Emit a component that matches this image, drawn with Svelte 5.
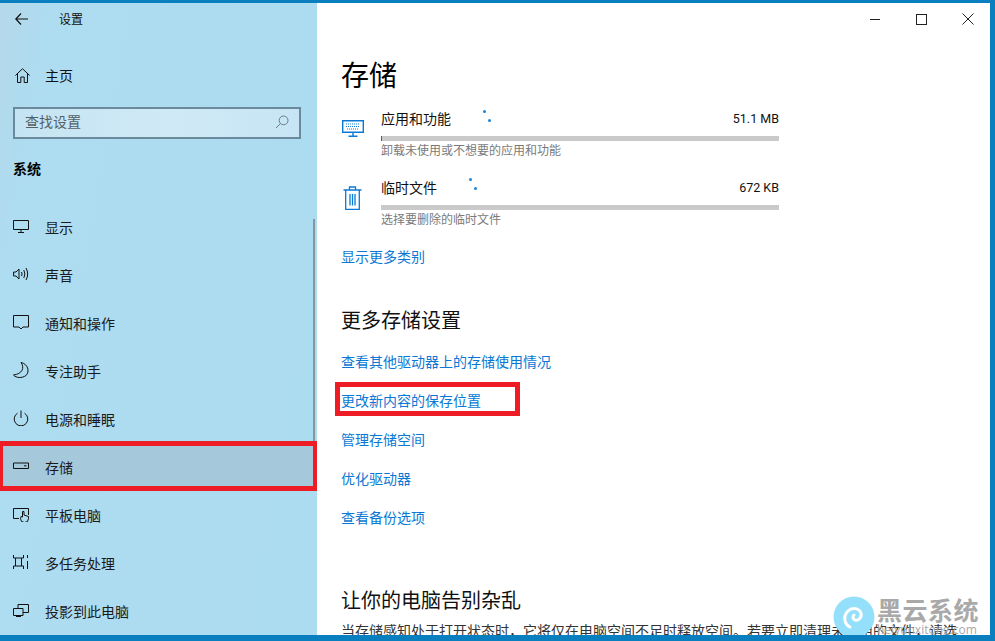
<script lang="ts">
  const navItems = [
    { id: "display", label: "显示" },
    { id: "sound", label: "声音" },
    { id: "notify", label: "通知和操作" },
    { id: "focus", label: "专注助手" },
    { id: "power", label: "电源和睡眠" },
    { id: "storage", label: "存储", active: true },
    { id: "tablet", label: "平板电脑" },
    { id: "multi", label: "多任务处理" },
    { id: "project", label: "投影到此电脑" }
  ];

  const links = [
    { label: "查看其他驱动器上的存储使用情况" },
    { label: "更改新内容的保存位置", marked: true },
    { label: "管理存储空间" },
    { label: "优化驱动器" },
    { label: "查看备份选项" }
  ];
</script>

<div class="desktop">
  <div class="window">
    <aside class="sidebar">
      <div class="head">
        <svg class="back" width="13" height="12" viewBox="0 0 13 12"><path d="M6 .5.8 6 6 11.500M.8 6H13" /></svg>
        <span>设置</span>
      </div>

      <div class="home">
        <svg width="15" height="15" viewBox="0 0 15 15"><path d="M.4 7.500 7.500.7l7.100 6.800M2.500 5.800v8.700h3.300V9h3.400v5.500h3.300V5.800" /></svg>
        <span>主页</span>
      </div>

      <div class="search">
        <span>查找设置</span>
        <svg width="14" height="14" viewBox="0 0 14 14"><circle cx="8.600" cy="5.400" r="4.400" /><path d="M5.400 8.600 1 13" /></svg>
      </div>

      <h2>系统</h2>

      <nav>
        {#each navItems as item}
          <div class="nav-item" class:active={item.active}>
            <svg width="16" height="16" viewBox="0 0 16 16">
              {#if item.id === "display"}
                <path d="M.5 2.500h15v9H.5zM8 11.500v3M5 14.500h6" />
              {:else if item.id === "sound"}
                <path d="M.6 6v4h2.400L6 13V3L3 6zM8.500 6q1.200 2 0 4M10.800 4q2.200 4 0 8M13 2q3.400 6 0 12" />
              {:else if item.id === "notify"}
                <path d="M.5 1.500h15v11.500H10L8 15l-2-2H.5z" />
              {:else if item.id === "focus"}
                <path d="M8 .5C12 6 9 12 .5 13 3 16 9 16.500 13 13.500 17 9.500 15 2 8 .5z" />
              {:else if item.id === "power"}
                <path d="M8 .5v7.500M4.500 3.200a6.800 6.800 0 1 0 7 0" />
              {:else if item.id === "storage"}
                <path d="M.5 5h15v5.500H.5zM11 7.800h2.500" />
              {:else if item.id === "tablet"}
                <path d="M6 12.500H.5v-10h15V9M7.500 12.500a4 4 0 0 0 8 0V10.500L11 9V5.500H9.500v5.500L8 10.500z" />
              {:else if item.id === "multi"}
                <path d="M.5 1v3h10V1M.5 15v-3h10v3M2.500 4v8M8.500 4v8M14.500 1v3M14.500 7v8" />
              {:else}
                <path d="M5 6V2.500h10.500v8H10M.5 6.500h9.500v7H.5zM3 14.500h5" />
              {/if}
            </svg>
            <span>{item.label}</span>
          </div>
        {/each}
      </nav>
      <div class="scrollbar"></div>
    </aside>

    <main class="content">
      <div class="controls">
        <i class="min"></i>
        <i class="max"></i>
        <svg width="12" height="12" viewBox="0 0 12 12"><path d="M.5.500l11 11M11.500.500l-11 11" /></svg>
      </div>

      <h1>存储</h1>

      <section class="usage">
        <svg class="usage-icon keys" width="22" height="17" viewBox="0 0 22 17">
          <path class="thick" d="M.7.700h20.600v11.600H.7zM11 12.300v3.500M6.500 16.300h9" />
          <path class="dots" d="M4 4h14M4 6.500h14M5 9h12" />
        </svg>
        <div class="usage-body">
          <div class="usage-top"><span>应用和功能</span><span class="size">51.1 MB</span></div>
          <div class="bar"><div class="fill" style="width: 1px"></div></div>
          <p>卸载未使用或不想要的应用和功能</p>
        </div>
        <b class="dot" style="left: 142px; top: 2px"></b>
        <b class="dot" style="left: 147px; top: 11px"></b>
      </section>

      <section class="usage">
        <svg class="usage-icon trash" width="19" height="24" viewBox="0 0 19 24">
          <path d="M.5 4h18M6.500 3.500V1h6v2.500M2.700 4v19.300h13.600V4M7 8v11.500M9.500 8v11.500M12 8v11.500" />
        </svg>
        <div class="usage-body">
          <div class="usage-top"><span>临时文件</span><span class="size">672 KB</span></div>
          <div class="bar"></div>
          <p>选择要删除的临时文件</p>
        </div>
        <b class="dot" style="left: 128px; top: 1px"></b>
        <b class="dot" style="left: 133px; top: 10px"></b>
      </section>

      <a class="more">显示更多类别</a>

      <h3>更多存储设置</h3>

      <div class="links">
        {#each links as link}
          <a class:marked={link.marked}>{link.label}</a>
        {/each}
      </div>

      <h3 class="clean">让你的电脑告别杂乱</h3>
      <p class="para">当存储感知处于打开状态时，它将仅在电脑空间不足时释放空间。若要立即清理未使用的文件，请选</p>

      <div class="watermark">
        <svg width="42" height="42" viewBox="0 0 42 42">
          <circle class="mark-disc" cx="21" cy="21" r="20.500" />
          <path class="mark-swirl" d="M17 31c-6-3-7-11-2-16 4-4 11-3 13 2 1 4-2 8-6 7-2-1-3-3-1-5" />
        </svg>
        <div class="mark-text">
          <strong>黑云系统</strong>
          <small>heiyunxitong.com</small>
        </div>
      </div>
    </main>
  </div>
</div>

<style>
  :global(body) {
    margin: 0;
  }

  .desktop {
    width: 995px;
    height: 641px;
    box-sizing: border-box;
    padding: 3px 5px 6px 0;
    background: #0a7fc0;
    overflow: hidden;
    font-family: "Noto Sans CJK SC", "Open Sans", sans-serif;
    font-size: 14px;
    color: #111;
  }

  .window {
    display: flex;
    height: 100%;
    background: #fff;
  }

  svg path,
  svg circle {
    fill: none;
    stroke: currentColor;
    stroke-width: 1;
  }

  .sidebar {
    position: relative;
    width: 317px;
    flex: none;
    background: linear-gradient(100deg, #b5d8ea 0, #aedcf0 12%, #acdcf0 100%);
  }

  .head {
    display: flex;
    align-items: center;
    gap: 31px;
    height: 32px;
    padding-left: 15px;
    font-size: 12px;
    line-height: 16px;
  }

  .back path {
    stroke-width: 1.200;
  }

  .home {
    display: flex;
    align-items: center;
    gap: 15px;
    height: 48px;
    margin-top: 16px;
    padding-left: 15px;
    line-height: 20px;
  }

  .search {
    display: flex;
    align-items: center;
    justify-content: space-between;
    box-sizing: border-box;
    width: 288px;
    height: 32px;
    margin: 8px 0 0 13px;
    padding: 0 10px;
    border: 2px solid #6b8a9c;
    background: linear-gradient(90deg, #c5e4f3, #d0e9f6 55%, #c6e5f4);
    color: #555f66;
    line-height: 20px;
  }

  .search span {
    margin-top: -4px;
  }

  .search svg {
    color: #6c7b84;
    margin-top: -2px;
  }

  h2 {
    margin: 19px 0 0 13px;
    font-size: 14px;
    font-weight: 700;
    line-height: 20px;
    color: #000;
  }

  nav {
    margin-top: 25px;
  }

  .nav-item {
    display: flex;
    align-items: center;
    gap: 16px;
    box-sizing: border-box;
    height: 48px;
    padding-left: 13px;
    line-height: 20px;
    color: #1a1a1a;
  }

  .nav-item svg {
    flex: none;
    margin-top: -3px;
    color: #111;
  }

  .nav-item.active {
    height: 50px;
    margin-top: -2px;
    padding: 2px 0 0 10px;
    border-style: solid;
    border-color: #ee1c25;
    border-width: 5px 4px 5px 3px;
    background: #a5c9da;
  }

  .scrollbar {
    position: absolute;
    left: 313px;
    top: 216px;
    width: 2px;
    height: 222px;
    background: #84979f;
  }

  .content {
    position: relative;
    flex: 1;
    min-width: 0;
    padding: 0 0 0 24px;
    overflow: hidden;
  }

  .controls {
    position: absolute;
    right: 0;
    top: 0;
    display: flex;
    align-items: center;
    width: 138px;
    height: 32px;
  }

  .controls i {
    display: block;
  }

  .controls .min {
    width: 10px;
    height: 1px;
    margin-left: 18px;
    background: #222;
  }

  .controls .max {
    width: 9px;
    height: 9px;
    margin-left: 36px;
    border: 1px solid #222;
  }

  .controls svg {
    margin-left: 35px;
    color: #222;
  }

  h1 {
    margin: 51px 0 0;
    font-size: 28px;
    font-weight: 400;
    line-height: 40px;
    color: #000;
  }

  .usage {
    position: relative;
    display: grid;
    grid-template-columns: 40px 1fr;
    width: 438px;
    height: 69px;
  }

  .usage:first-of-type {
    margin-top: 14px;
  }

  .usage-icon {
    color: #0a7ad6;
  }

  .usage-icon.keys {
    margin: 12px 0 0 1px;
  }

  .usage-icon .thick {
    stroke-width: 1.400;
  }

  .usage-icon .dots {
    stroke-dasharray: 1 1;
  }

  .usage-icon.trash {
    margin: 9px 0 0 2px;
  }

  .usage-icon.trash path {
    stroke-width: 1.300;
  }

  .usage-top {
    display: flex;
    justify-content: space-between;
    line-height: 20px;
    color: #111;
  }

  .size {
    padding-top: 1px;
    font-family: Roboto, "Noto Sans CJK SC", sans-serif;
    font-size: 12.500px;
  }

  .bar {
    height: 5px;
    margin-top: 7px;
    background: #cacaca;
  }

  .fill {
    height: 5px;
    background: #0a6fc4;
  }

  .usage p {
    margin: 0;
    font-size: 12px;
    line-height: 18px;
    color: #7a7a7a;
  }

  .dot {
    position: absolute;
    width: 3px;
    height: 3px;
    border-radius: 50%;
    background: #1a84dc;
  }

  a {
    display: block;
    color: #0a78d4;
    line-height: 20px;
  }

  .more {
    margin-top: 0;
  }

  h3 {
    margin: 0;
    font-size: 20px;
    font-weight: 400;
    line-height: 28px;
    color: #111;
  }

  .more + h3 {
    margin-top: 40px;
  }

  .links {
    display: flex;
    flex-direction: column;
    gap: 19px;
    margin-top: 17px;
  }

  .links a {
    width: max-content;
  }

  .links a.marked {
    position: relative;
  }

  .links a.marked::after {
    content: "";
    position: absolute;
    left: -6px;
    top: -8px;
    box-sizing: border-box;
    width: 185px;
    height: 34px;
    border: 5px solid #ee1c25;
  }

  .clean {
    margin-top: 59px;
  }

  .para {
    margin: 6px 0 0;
    white-space: nowrap;
    line-height: 20px;
    color: #333;
  }

  .watermark {
    position: absolute;
    left: 516px;
    top: 591px;
    display: flex;
    gap: 2px;
    pointer-events: none;
  }

  .watermark svg {
    margin-top: 2px;
  }

  .mark-disc {
    fill: #94e0fb;
    stroke: none;
  }

  .mark-swirl {
    stroke: #fff;
    stroke-width: 3;
    stroke-linecap: round;
  }

  .mark-text {
    display: flex;
    flex-direction: column;
  }

  .mark-text strong {
    font-size: 25px;
    line-height: 30px;
    letter-spacing: 0.5px;
    color: #a9a9a9;
  }

  .mark-text small {
    font-size: 12px;
    line-height: 12px;
    color: #a8a8a8;
    font-family: "Open Sans", sans-serif;
  }
</style>
